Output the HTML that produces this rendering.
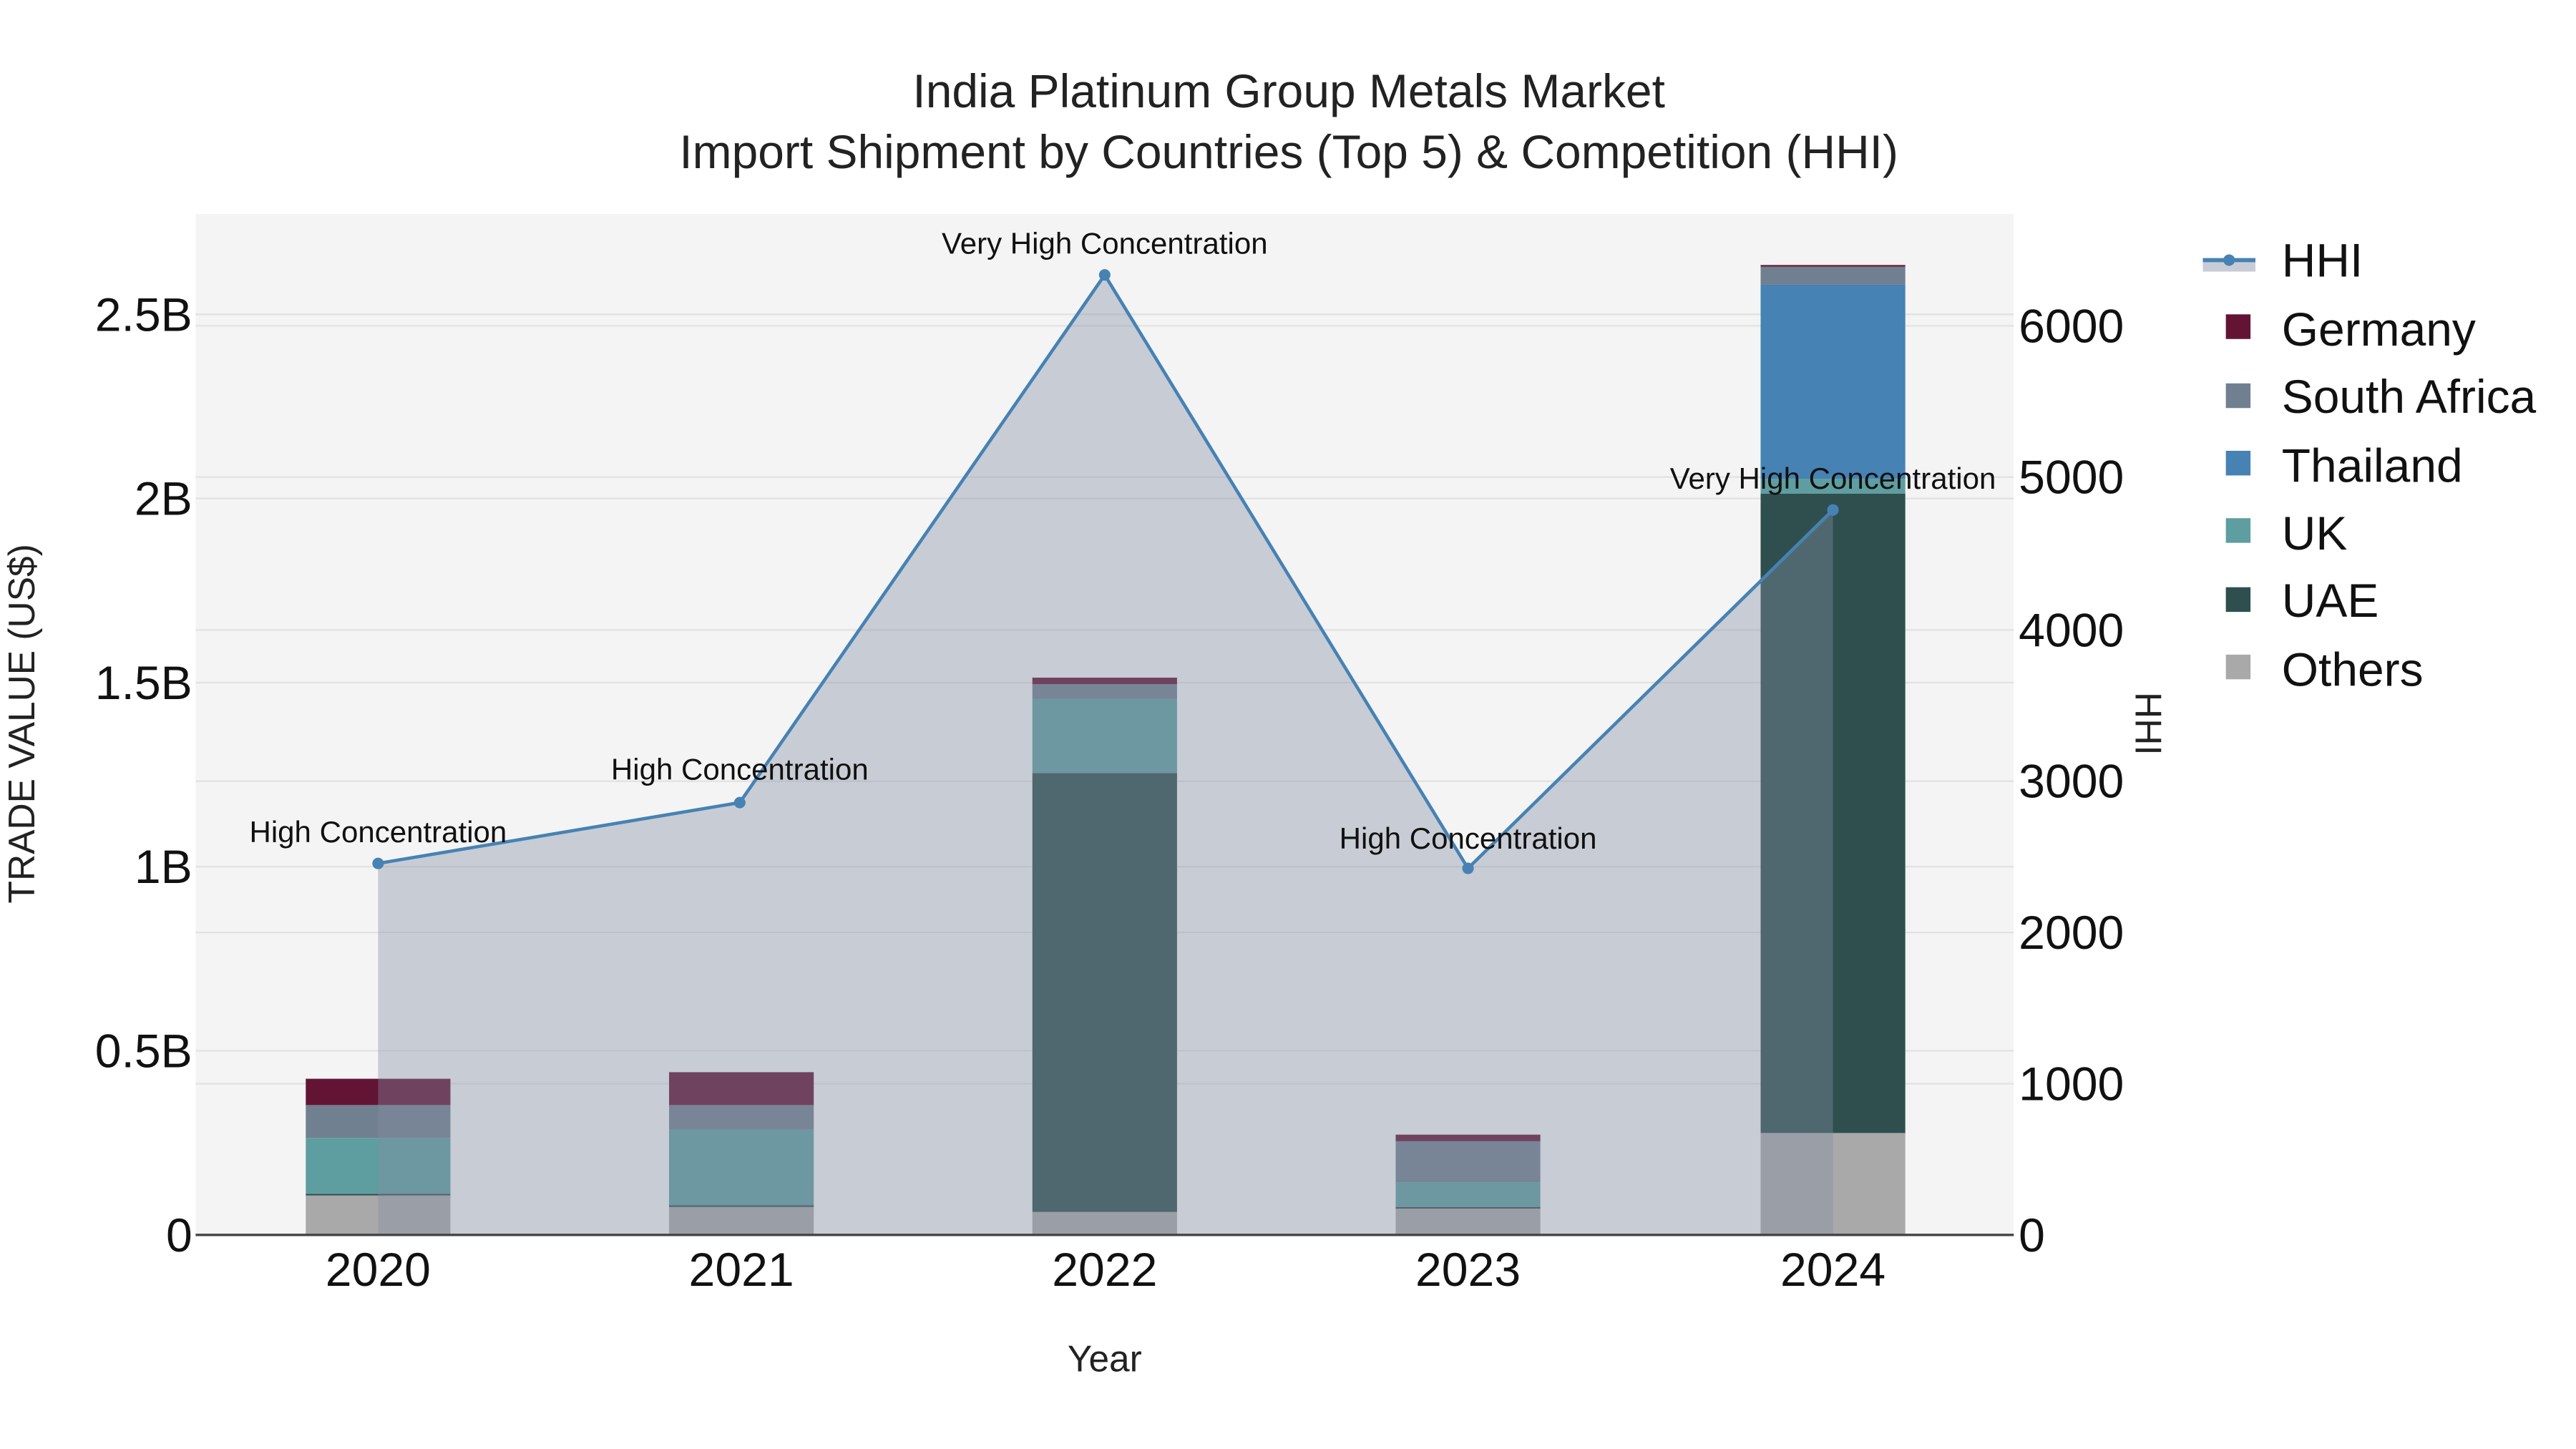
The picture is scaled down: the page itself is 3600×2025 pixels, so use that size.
<!DOCTYPE html>
<html><head><meta charset="utf-8"><style>html,body{margin:0;padding:0;background:#fff}svg{display:block}</style></head><body>
<svg width="3600" height="2025" viewBox="0 0 1567 881" xmlns="http://www.w3.org/2000/svg" font-family="Liberation Sans, sans-serif">
<rect width="1567" height="881" fill="#fff"/>
<rect x="119" y="130" width="1106" height="621" fill="#f4f4f4"/>
<g stroke="#e2e2e2" stroke-width="1">
<line x1="119" x2="1225" y1="639" y2="639"/><line x1="119" x2="1225" y1="527" y2="527"/><line x1="119" x2="1225" y1="415" y2="415"/><line x1="119" x2="1225" y1="303" y2="303"/><line x1="119" x2="1225" y1="191" y2="191"/>
<line x1="119" x2="1225" y1="659" y2="659"/><line x1="119" x2="1225" y1="567" y2="567"/><line x1="119" x2="1225" y1="475" y2="475"/><line x1="119" x2="1225" y1="383" y2="383"/><line x1="119" x2="1225" y1="290" y2="290"/><line x1="119" x2="1225" y1="198" y2="198"/>
</g>
<g>
<rect x="186" y="727" width="88" height="24" fill="#a9a9a9"/><rect x="186" y="726" width="88" height="1" fill="#2f4f4f"/><rect x="186" y="692" width="88" height="34" fill="#5f9ea0"/><rect x="186" y="672" width="88" height="20" fill="#708090"/><rect x="186" y="656" width="88" height="16" fill="#631435"/>
<rect x="407" y="734" width="88" height="17" fill="#a9a9a9"/><rect x="407" y="733" width="88" height="1" fill="#2f4f4f"/><rect x="407" y="687" width="88" height="46" fill="#5f9ea0"/><rect x="407" y="672" width="88" height="15" fill="#708090"/><rect x="407" y="652" width="88" height="20" fill="#631435"/>
<rect x="628" y="737" width="88" height="14" fill="#a9a9a9"/><rect x="628" y="470" width="88" height="267" fill="#2f4f4f"/><rect x="628" y="425" width="88" height="45" fill="#5f9ea0"/><rect x="628" y="416" width="88" height="9" fill="#708090"/><rect x="628" y="412" width="88" height="4" fill="#631435"/>
<rect x="849" y="735" width="88" height="16" fill="#a9a9a9"/><rect x="849" y="734" width="88" height="1" fill="#2f4f4f"/><rect x="849" y="719" width="88" height="15" fill="#5f9ea0"/><rect x="849" y="694" width="88" height="25" fill="#708090"/><rect x="849" y="690" width="88" height="4" fill="#631435"/>
<rect x="1071" y="689" width="88" height="62" fill="#a9a9a9"/><rect x="1071" y="300" width="88" height="389" fill="#2f4f4f"/><rect x="1071" y="291" width="88" height="9" fill="#5f9ea0"/><rect x="1071" y="173" width="88" height="118" fill="#4682b4"/><rect x="1071" y="162" width="88" height="11" fill="#708090"/><rect x="1071" y="161" width="88" height="1" fill="#631435"/>
</g>
<polygon points="230,751 230,525 450,488 672,167 893,528 1115,310 1115,751" fill="rgb(131,141,162)" fill-opacity="0.39"/>
<line x1="119" x2="1225" y1="751" y2="751" stroke="#444" stroke-width="1.5"/>
<polyline points="230,525 450,488 672,167 893,528 1115,310" fill="none" stroke="#4682b4" stroke-width="2"/>
<g fill="#4682b4"><circle cx="230" cy="525" r="3.5"/><circle cx="450" cy="488" r="3.5"/><circle cx="672" cy="167" r="3.5"/><circle cx="893" cy="528" r="3.5"/><circle cx="1115" cy="310" r="3.5"/></g>
<g font-size="18.3" fill="#111" text-anchor="middle">
<text x="230" y="512">High Concentration</text><text x="450" y="474">High Concentration</text><text x="672" y="154">Very High Concentration</text><text x="893" y="516">High Concentration</text><text x="1115" y="297">Very High Concentration</text>
</g>
<g font-size="28.7" fill="#222" text-anchor="middle">
<text x="784" y="65">India Platinum Group Metals Market</text>
<text x="784" y="102">Import Shipment by Countries (Top 5) &amp; Competition (HHI)</text>
</g>
<g font-size="28.8" fill="#111" text-anchor="end">
<text x="117" y="761">0</text><text x="117" y="649">0.5B</text><text x="117" y="537">1B</text><text x="117" y="425">1.5B</text><text x="117" y="313">2B</text><text x="117" y="201">2.5B</text>
</g>
<g font-size="28.8" fill="#111">
<text x="1228" y="761">0</text><text x="1228" y="669">1000</text><text x="1228" y="577">2000</text><text x="1228" y="485">3000</text><text x="1228" y="393">4000</text><text x="1228" y="300">5000</text><text x="1228" y="208">6000</text>
</g>
<g font-size="28.8" fill="#111" text-anchor="middle">
<text x="230" y="782">2020</text><text x="451" y="782">2021</text><text x="672" y="782">2022</text><text x="893" y="782">2023</text><text x="1115" y="782">2024</text>
</g>
<text x="672" y="834" font-size="22.4" fill="#222" text-anchor="middle">Year</text>
<text transform="translate(21,440) rotate(-90)" font-size="22.4" fill="#222" text-anchor="middle">TRADE VALUE (US$)</text>
<text transform="translate(1299,440) rotate(90)" font-size="22.4" fill="#222" text-anchor="middle">HHI</text>
<rect x="1340" y="158" width="32" height="7" fill="#c8ccd6"/>
<line x1="1340" x2="1372" y1="158" y2="158" stroke="#4682b4" stroke-width="2.5"/>
<circle cx="1356" cy="158" r="3.5" fill="#4682b4"/>
<g font-size="28.7" fill="#111">
<text x="1388" y="168">HHI</text>
<text x="1388" y="210">Germany</text>
<text x="1388" y="251">South Africa</text>
<text x="1388" y="293">Thailand</text>
<text x="1388" y="334">UK</text>
<text x="1388" y="375">UAE</text>
<text x="1388" y="417">Others</text>
</g>
<rect x="1354" y="191" width="15" height="15" fill="#631435"/>
<rect x="1354" y="233" width="15" height="15" fill="#708090"/>
<rect x="1354" y="274" width="15" height="15" fill="#4682b4"/>
<rect x="1354" y="315" width="15" height="15" fill="#5f9ea0"/>
<rect x="1354" y="357" width="15" height="15" fill="#2f4f4f"/>
<rect x="1354" y="398" width="15" height="15" fill="#a9a9a9"/>
</svg>
</body></html>
